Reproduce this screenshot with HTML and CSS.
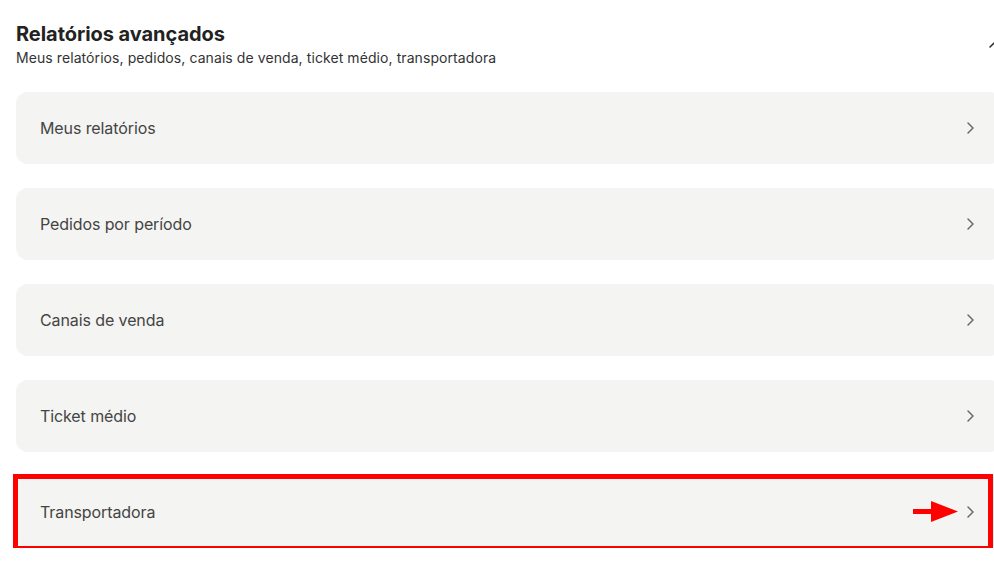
FILE: index.html
```html
<!DOCTYPE html>
<html lang="pt-BR">
<head>
  <meta charset="UTF-8" />
  <meta name="viewport" content="width=device-width, initial-scale=1.0">
  <title>Relatórios avançados</title>
  <link rel="stylesheet" href="styles.css">
</head>
<body>

  <div class="section">
    <div class="section-header">
      <div>
        <h2>Relatórios avançados</h2>
        <p class="subtitle">Meus relatórios, pedidos, canais de venda, ticket médio, transportadora</p>
      </div>
      <svg class="toggle" width="16" height="16" viewBox="0 0 16 16" fill="none">
        <path d="M4 10l4-4 4 4" stroke="#333" stroke-width="1.6" stroke-linecap="round" stroke-linejoin="round"/>
      </svg>
    </div>

    <!-- Lista de relatórios -->
    <ul class="reports">
      <li class="report">
        <span>Meus relatórios</span>
        <svg class="chevron" width="16" height="16" viewBox="0 0 16 16" fill="none"><path d="M6 3l5 5-5 5" stroke="#6b6b6b" stroke-width="1.5" stroke-linecap="round" stroke-linejoin="round"/></svg>
      </li>
      <li class="report">
        <span>Pedidos por período</span>
        <svg class="chevron" width="16" height="16" viewBox="0 0 16 16" fill="none"><path d="M6 3l5 5-5 5" stroke="#6b6b6b" stroke-width="1.5" stroke-linecap="round" stroke-linejoin="round"/></svg>
      </li>
      <li class="report">
        <span>Canais de venda</span>
        <svg class="chevron" width="16" height="16" viewBox="0 0 16 16" fill="none"><path d="M6 3l5 5-5 5" stroke="#6b6b6b" stroke-width="1.5" stroke-linecap="round" stroke-linejoin="round"/></svg>
      </li>
      <li class="report">
        <span>Ticket médio</span>
        <svg class="chevron" width="16" height="16" viewBox="0 0 16 16" fill="none"><path d="M6 3l5 5-5 5" stroke="#6b6b6b" stroke-width="1.5" stroke-linecap="round" stroke-linejoin="round"/></svg>
      </li>
      <li class="report highlighted">
        <span>Transportadora</span>
        <svg class="chevron" width="16" height="16" viewBox="0 0 16 16" fill="none"><path d="M6 3l5 5-5 5" stroke="#6b6b6b" stroke-width="1.5" stroke-linecap="round" stroke-linejoin="round"/></svg>
        <svg class="pointer" width="46" height="22" viewBox="0 0 46 22">
          <rect x="0" y="8" width="19" height="5" fill="#ff0000"/>
          <polygon points="18,0 45,10.5 18,21" fill="#ff0000"/>
        </svg>
        <div class="highlight-box"></div>
      </li>
    </ul>
  </div>

</body>
</html>
```

FILE: styles.css
```css
* {
  margin: 0;
  padding: 0;
  box-sizing: border-box;
}

body {
  background-color: #fff;
  color: #3d3d3d;
  font-family: Inter, "Noto Sans", Arial, sans-serif;
  overflow: hidden;
  padding: 20px 0 0 16px;
}

.section {
  width: 986px;
}

.section-header {
  display: flex;
  justify-content: space-between;
  align-items: center;
}

.section-header h2 {
  font-size: 20px;
  line-height: 28px;
  font-weight: 700;
  color: #222;
  letter-spacing: -0.05px;
}

.subtitle {
  font-size: 14px;
  line-height: 20px;
  color: #333;
  letter-spacing: 0.08px;
}

.toggle {
  flex-shrink: 0;
  margin-top: 2px;
}

.reports {
  list-style: none;
  margin-top: 24px;
  display: flex;
  flex-direction: column;
  gap: 24px;
}

.report {
  position: relative;
  display: flex;
  align-items: center;
  justify-content: space-between;
  height: 72px;
  padding: 0 24px;
  background: #f4f4f2;
  border-radius: 12px;
  font-size: 16px;
  color: #444;
  letter-spacing: -0.1px;
}

.chevron {
  flex-shrink: 0;
}

/* Destaque */
.pointer {
  position: absolute;
  left: 897px;
  top: 25px;
}

.highlight-box {
  position: absolute;
  left: -3px;
  top: -2px;
  width: 980px;
  height: 77px;
  border: 5px solid #ff0000;
  pointer-events: none;
}
```
